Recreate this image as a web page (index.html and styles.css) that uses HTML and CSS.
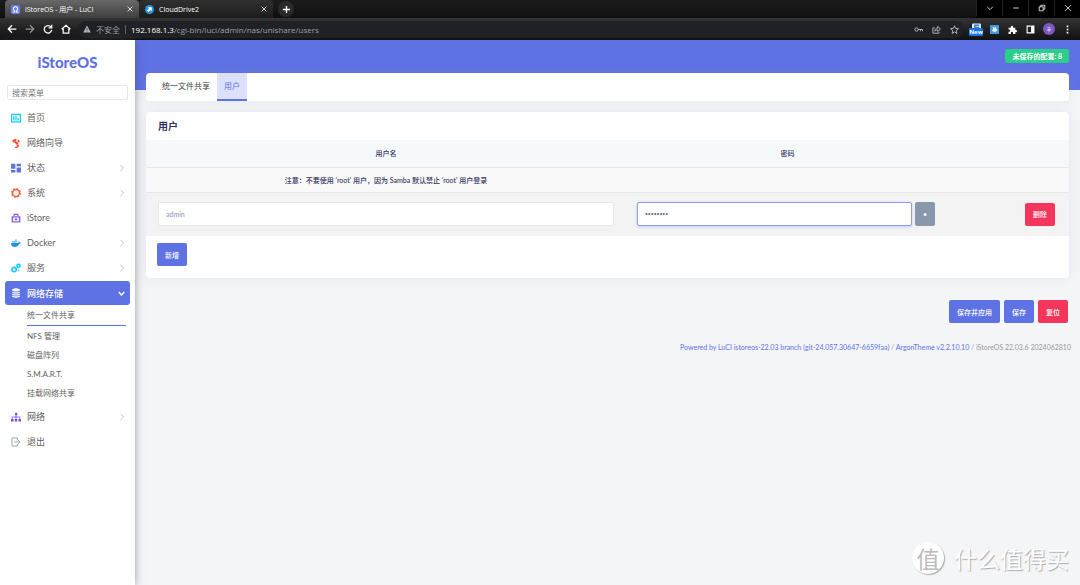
FILE: index.html
```html
<!DOCTYPE html>
<html lang="zh-CN">
<head>
<meta charset="utf-8">
<title>iStoreOS - 用户 - LuCI</title>
<link rel="stylesheet" href="styles.css">
</head>
<body>
<header class="browser">
  <div class="tabstrip">
    <div class="btab btab-active">
      <svg class="fav" viewBox="0 0 16 16"><rect width="16" height="16" rx="3" fill="#6b7df0"/><path d="M3 12.500h3.500v-2a3.800 3.800 0 1 1 3 0v2H13" fill="none" stroke="#fff" stroke-width="1.800"/></svg>
      <span class="btab-title">iStoreOS - 用户 - LuCI</span>
      <button class="x" aria-label="关闭标签页"><svg viewBox="0 0 10 10"><path d="M2 2l6 6M8 2L2 8"/></svg></button>
    </div>
    <div class="btab">
      <svg class="fav" viewBox="0 0 16 16"><circle cx="8" cy="8" r="8" fill="#2596dc"/><path d="M5 4h7v7l-2.500-2L6 12.500 3.500 10 7 6.500z" fill="#fff"/></svg>
      <span class="btab-title">CloudDrive2</span>
      <button class="x" aria-label="关闭标签页"><svg viewBox="0 0 10 10"><path d="M2 2l6 6M8 2L2 8"/></svg></button>
    </div>
    <button class="newtab" aria-label="新标签页"><svg viewBox="0 0 10 10"><path d="M5 1v8M1 5h8"/></svg></button>
    <div class="winctl">
      <button aria-label="搜索标签页"><svg viewBox="0 0 10 10"><path d="M1.500 3.500L5 7l3.500-3.500"/></svg></button>
      <button aria-label="最小化"><svg viewBox="0 0 10 10"><path d="M1.500 5h7"/></svg></button>
      <button aria-label="还原"><svg viewBox="0 0 10 10"><path d="M1.500 3.500h5v5h-5zM3.500 3.500v-2h5v5h-2"/></svg></button>
      <button aria-label="关闭"><svg viewBox="0 0 10 10"><path d="M1.500 1.500l7 7M8.500 1.500l-7 7"/></svg></button>
    </div>
  </div>
  <div class="toolbar">
    <div class="nav">
      <button aria-label="后退"><svg viewBox="0 0 16 16"><path d="M15 8H2M8 2L2 8l6 6"/></svg></button>
      <button class="dim" aria-label="前进"><svg viewBox="0 0 16 16"><path d="M1 8h13M8 2l6 6-6 6"/></svg></button>
      <button aria-label="重新加载"><svg viewBox="0 0 16 16"><path d="M13 5a6 6 0 1 0 1 4.500M14 1v5H9"/></svg></button>
      <button aria-label="主页"><svg viewBox="0 0 16 16"><path d="M1 8.500L8 2l7 6.500M3.500 7v7.500h9V7"/></svg></button>
    </div>
    <div class="address">
      <svg class="warn" viewBox="0 0 16 16"><path d="M8 1l7.500 14H.5z" fill="#b4b7bb"/><path d="M8 6v4M8 11.500v1.500" stroke="#202124" stroke-width="1.500"/></svg>
      <span class="unsafe">不安全</span>
      <span class="url"><b>192.168.1.3</b>/cgi-bin/luci/admin/nas/unishare/users</span>
      <span class="addr-actions">
        <svg viewBox="0 0 16 16"><circle cx="4.500" cy="8" r="3"/><path d="M7.500 8H15v3M11.500 8v3"/></svg>
        <svg viewBox="0 0 16 16"><path d="M5 5H1.500v9.500h11V12M5 11c0-4 3-5.500 5-5.500V2.500L15 7l-5 4.500v-3C8 8.500 6 9 5 11z"/></svg>
        <svg viewBox="0 0 16 16"><path d="M8 1.500l2 4.500 5 .5-3.800 3.300L12.300 15 8 12.300 3.700 15l1.100-5.200L1 6.500 6 6z"/></svg>
      </span>
    </div>
    <div class="ext">
      <span class="ext-new"><svg viewBox="0 0 16 16"><rect y="1" width="16" height="15" rx="2" fill="#e8edf3"/><path d="M13 4H5v4h8" fill="none" stroke="#2585c8" stroke-width="2.500"/></svg><i>New</i></span>
      <svg viewBox="0 0 16 16"><rect width="16" height="16" rx="1" fill="#4796df"/><path d="M5 3l3 2 3-2v4l3 2-5 4-6-3 2-2z" fill="#d9efff"/></svg>
      <svg viewBox="0 0 16 16"><path d="M1 5h4V3.500a2 2 0 0 1 4 0V5h4v4h1a2 2 0 0 1 0 4h-1v3H9v-2a2 2 0 0 0-4 0v2H1v-4h1a2 2 0 0 0 0-4H1z" fill="#fff"/></svg>
      <svg viewBox="0 0 16 16"><path d="M1 1h14v14H1zM3 3v10h6V3z" fill="#fff" fill-rule="evenodd"/></svg>
      <span class="avatar">丰</span>
      <svg viewBox="0 0 16 16"><path d="M6.500 1h3v3h-3zM6.500 6.500h3v3h-3zM6.500 12h3v3h-3z" fill="#fff"/></svg>
    </div>
  </div>
</header>

<div class="page">
  <aside class="sidebar">
    <a class="brand" href="#">iStoreOS</a>
    <input class="search" type="text" placeholder="搜索菜单" aria-label="搜索菜单">
    <nav class="menu">
      <a class="item" href="#"><svg viewBox="0 0 16 16"><path d="M0 1h16v14H0zM2 3v10h12V3z" fill="#11cdef" fill-rule="evenodd"/><path d="M3.500 5h2v7h-2zM7 4.500h2V12H7zM10.500 8h2v4h-2z" fill="#11cdef"/></svg><span>首页</span></a>
      <a class="item" href="#"><svg viewBox="0 0 16 16"><path d="M2 4l4-3 3 1-1 3 4 3-1 3-3-1-2-3-3 0zM11 2l3 3-1 3-3-3zM9 11l3-1 1 3-3 3H6l1-2 2 0z" fill="#fb5a3a"/></svg><span>网络向导</span></a>
      <a class="item" href="#"><svg viewBox="0 0 16 16"><path d="M0 1h7v8H0zM9 1h7v4H9zM9 7h7v8H9zM0 11h7v4H0z" fill="#5e72e4"/></svg><span>状态</span><svg class="arrow" viewBox="0 0 10 10"><path d="M3 1l4 4-4 4"/></svg></a>
      <a class="item" href="#"><svg viewBox="0 0 16 16"><circle cx="8" cy="8" r="5.500" fill="none" stroke="#fb6340" stroke-width="2.500"/><circle cx="8" cy="8" r="7" fill="none" stroke="#fb6340" stroke-width="2" stroke-dasharray="2.800 2.700"/></svg><span>系统</span><svg class="arrow" viewBox="0 0 10 10"><path d="M3 1l4 4-4 4"/></svg></a>
      <a class="item" href="#"><svg viewBox="0 0 16 16"><path d="M5 5V2h6v3" fill="none" stroke="#8965e0" stroke-width="2"/><path d="M1 5h14v10H1zM3.500 7v6h9V7z" fill="#8965e0" fill-rule="evenodd"/><path d="M7 8h2v1h1v2H9v1H7v-1H6V9h1z" fill="#8965e0"/></svg><span>iStore</span></a>
      <a class="item" href="#"><svg viewBox="0 0 16 16"><path d="M0 8h11c1 0 1.500-1 1-2.500l1-.5 1 2 2 .3c-.5 1.500-1.500 2-3 2C11.500 13 9 14.500 6 14.500 2 14.500 0 12 0 8zM2 5h2v2H2zM4.500 5h2v2h-2zM7 5h2v2H7zM7 2.500h2v2H7z" fill="#1d93e8"/></svg><span>Docker</span><svg class="arrow" viewBox="0 0 10 10"><path d="M3 1l4 4-4 4"/></svg></a>
      <a class="item" href="#"><svg viewBox="0 0 16 16"><g fill="none" stroke="#11cdef" stroke-width="2.500"><circle cx="5" cy="10.500" r="3.500"/><circle cx="12" cy="4.500" r="2.500"/></g><circle cx="12.500" cy="12" r="1.200" fill="#11cdef"/></svg><span>服务</span><svg class="arrow" viewBox="0 0 10 10"><path d="M3 1l4 4-4 4"/></svg></a>
      <a class="item open" href="#"><svg viewBox="0 0 16 16"><path d="M2 2q6-3 12 0v2.500q-6 2-12 0zM2 5.800q6 2 12 0v2q-6 2-12 0zM2 9q6 2 12 0v2q-6 2-12 0zM2 12.300q6 2 12 0V14.500q-6 2-12 0z" fill="#fff"/></svg><span>网络存储</span><svg class="arrow" viewBox="0 0 10 10"><path d="M1 3l4 4 4-4"/></svg></a>
      <div class="submenu">
        <a class="current" href="#">统一文件共享</a>
        <a href="#">NFS 管理</a>
        <a href="#">磁盘阵列</a>
        <a href="#">S.M.A.R.T.</a>
        <a href="#">挂载网络共享</a>
      </div>
      <a class="item" href="#"><svg viewBox="0 0 16 16"><path d="M6.500 1h3.500v4H6.500zM0 11h4v4H0zM6 11h4v4H6zM12 11h4v4h-4z" fill="#7f4be0"/><path d="M8 5v6M2 11V8h12v3" fill="none" stroke="#7f4be0" stroke-width="1.300"/></svg><span>网络</span><svg class="arrow" viewBox="0 0 10 10"><path d="M3 1l4 4-4 4"/></svg></a>
      <a class="item" href="#"><svg viewBox="0 0 16 16"><path d="M10 5V1.500H1.500v13H10V11M5 8h9.500M11.500 5l3 3-3 3" fill="none" stroke="#98a2ad" stroke-width="1.500"/></svg><span>退出</span></a>
    </nav>
  </aside>

  <div class="main">
    <div class="banner"><a class="badge" href="#">未保存的配置: 8</a></div>
    <main class="content">
      <nav class="tabs card">
        <a href="#">统一文件共享</a>
        <a class="selected" href="#">用户</a>
      </nav>
      <form class="section card">
        <h3>用户</h3>
        <table>
          <thead>
            <tr class="titles"><th class="c-name">用户名</th><th class="c-pass">密码</th><th class="c-act"></th></tr>
            <tr class="notes"><th>注意：不要使用 'root' 用户，因为 Samba 默认禁止 'root' 用户登录</th><th></th><th></th></tr>
          </thead>
          <tbody>
            <tr>
              <td><input class="field" type="text" value="admin" aria-label="用户名"></td>
              <td class="pass-cell"><div class="pass"><input class="field focus" type="password" value="12345678" aria-label="密码"><button class="btn reveal" type="button" aria-label="显示密码">•</button></div></td>
              <td class="right"><button class="btn danger" type="button">删除</button></td>
            </tr>
          </tbody>
        </table>
        <div class="add"><button class="btn" type="button">新增</button></div>
      </form>
      <div class="actions">
        <button class="btn" type="button">保存并应用</button>
        <button class="btn" type="button">保存</button>
        <button class="btn danger" type="button">复位</button>
      </div>
    </main>
    <footer><a href="#">Powered by LuCI istoreos-22.03 branch (git-24.057.30647-6659faa)</a> / <a href="#">ArgonTheme v2.2.10.10</a> / iStoreOS 22.03.6 2024062810</footer>
  </div>
</div>
<div class="watermark"><span class="seal">值</span><span>什么值得买</span></div>
</body>
</html>
```

FILE: styles.css
```css
* { box-sizing: border-box; }
body {
  margin: 0;
  min-height: 100vh;
  display: flex;
  flex-direction: column;
  background: #f4f5f7;
  color: #525f7f;
  font-family: Lato, "Noto Sans CJK SC", sans-serif;
  font-size: 8px;
}
a { color: inherit; text-decoration: none; }
button { padding: 0; border: 0; background: none; color: inherit; font: inherit; }
input { font: inherit; }
svg { display: block; flex: none; }

/* browser frame */
.browser { color: #fff; background: #111; font-family: "Open Sans", "Noto Sans CJK SC", sans-serif; }
.browser svg { fill: none; stroke-width: 1; }
.browser button svg { stroke: #fff; }
.tabstrip { display: flex; align-items: stretch; height: 18px; padding-left: 5px; background: linear-gradient(#1b1b1b, #101010); }
.btab { display: flex; align-items: center; width: 134px; padding: 0 5px 0 6px; background: linear-gradient(#303030, #1c1c1c); border-radius: 4px 4px 0 0; }
.btab-active { background: linear-gradient(#686868, #3e3e3e); }
.fav { width: 9px; height: 9px; margin-right: 5px; }
.btab-title { flex: 1; font-size: 7px; white-space: nowrap; }
.x svg { width: 8px; height: 8px; }
.newtab { display: flex; align-items: center; justify-content: center; width: 16px; margin: 1px 0 1px 5px; border-radius: 50%; background: #2a2a2a; }
.newtab svg { width: 9px; height: 9px; }
.browser .newtab svg { stroke-width: 1.5; }
.winctl { display: flex; margin-left: auto; background: #000; }
.winctl button { display: flex; align-items: center; justify-content: center; width: 26px; height: 16px; border-left: 1px solid #222; }
.winctl svg { width: 8px; height: 8px; }
.toolbar { display: flex; align-items: center; height: 22px; padding: 0 8px 0 6px; background: linear-gradient(#333, #111); }
.nav { display: flex; gap: 8px; padding: 0 7px 0 1px; }
.nav svg { width: 10px; height: 10px; }
.browser .nav svg { stroke-width: 2; }
.nav .dim { opacity: .5; }
.address { display: flex; flex: 1; align-items: center; height: 17px; padding: 0 5px; border-radius: 9px; background: #202124; color: #9aa0a6; }
.warn { width: 8px; height: 8px; margin-right: 5px; }
.unsafe { padding-right: 5px; margin-right: 5px; border-right: 1px solid #5f6368; line-height: 9px; }
.url b { color: #fff; font-weight: 400; }
.addr-actions { display: flex; gap: 9px; margin-left: auto; }
.addr-actions svg { width: 9px; height: 9px; stroke: #c4c7cb; stroke-width: 1.5; }
.ext { display: flex; align-items: center; gap: 9px; padding-left: 5px; }
.ext svg { width: 9px; height: 9px; }
.ext-new { display: flex; flex-direction: column; align-items: center; width: 14px; margin-right: -2px; }
.ext-new i { width: 14px; margin-top: -4px; border-radius: 1px; background: #1a73e8; font-size: 6px; font-style: normal; font-weight: 700; line-height: 8px; text-align: center; z-index: 1; }
.avatar { width: 12px; margin: 0 -1px; border-radius: 50%; background: #7e57c2; font-size: 5px; line-height: 12px; text-align: center; }

/* sidebar */
.page { display: flex; flex: 1; }
.sidebar { width: 135px; background: #fff; box-shadow: 0 0 8px rgba(60, 60, 80, .5); z-index: 1; }
.brand { display: block; padding-top: 13px; color: #5e72e4; font-size: 15px; font-weight: 900; line-height: 18px; text-align: center; }
.search { display: block; width: calc(100% - 14px); height: 15px; margin: 14px 7px 5px; padding: 0 4px; border: 1px solid #e6e8ee; border-radius: 2px; font-size: 8px; }
.search::placeholder { color: #777; }
.item { display: flex; align-items: center; height: 25px; padding: 0 9px 0 11px; color: #5f5f5f; font-size: 9px; }
.item > svg:first-child { width: 10px; height: 10px; margin-right: 6px; }
.item .arrow { width: 8px; height: 8px; margin-left: auto; fill: none; stroke: #a9b2c0; stroke-width: 1; }
.open { height: 24px; margin: 1px 5px 0; padding: 0 5px 0 6px; border-radius: 3px; background: #5e72e4; color: #fff; font-weight: 500; }
.item.open .arrow { width: 7px; height: 7px; stroke: #fff; stroke-width: 2; }
.submenu { display: flex; flex-direction: column; padding: 1px 9px 1px 27px; color: #5f5f5f; line-height: 19px; }
.submenu a + a { padding-top: 0; }
.submenu .current { margin-bottom: 1px; border-bottom: 1px solid #5e72e4; color: #5f5f5f; }

/* main column */
.main { flex: 1; min-width: 0; }
.banner { display: flex; justify-content: flex-end; align-items: flex-start; height: 50px; padding: 9px 11px 0; background: #5e72e4; }
.badge { padding: 0 7px; border-radius: 2px; background: #2dce89; color: #fff; font-size: 7px; font-weight: 700; line-height: 14px; }
.content { margin-top: -17px; padding: 0 11px; }
.card { background: #fff; border-radius: 4px; box-shadow: 0 0 12px rgba(136, 152, 170, .15); }
.tabs { display: flex; padding-left: 9px; line-height: 26px; color: #444; }
.tabs a { padding: 0 7px; border-bottom: 2px solid transparent; }
.tabs .selected { background: #dce0fb; border-color: #5e72e4; color: #5e72e4; }
.section { margin-top: 11px; }
h3 { margin: 0; padding: 0 12px; color: #32325d; font-size: 10px; line-height: 28px; }
table { width: 100%; table-layout: fixed; border-collapse: collapse; color: #32325d; }
th { height: 25px; padding: 0; background: #f9f9f9; border-bottom: 1px solid #e6e7ea; font-size: 7px; font-weight: 500; white-space: nowrap; }
.titles th { height: 27px; background: #f6f9fc; }
.c-name { width: 52%; }
.c-pass { width: 35%; }
.c-act { width: 13%; }
td { height: 44px; padding: 0 12px; background: #f3f3f3; }
.pass-cell { padding: 0 14px 0 11px; }
td.right { padding-right: 14px; text-align: right; }
.field { display: block; width: 100%; height: 24px; padding: 0 7px; border: 1px solid #e6e8ee; border-radius: 2px; background: #fff; color: #8898aa; font-size: 7px; }
.focus { border-color: #8f9dec; box-shadow: 0 1px 3px rgba(94, 114, 228, .3); font-size: 5px; }
.pass { display: flex; gap: 3px; }
.pass .field { flex: 1; min-width: 0; }
.pass .focus { font-size: 5px; color: #5f6b7c; }
.btn { height: 23px; padding: 0 8px; border-radius: 2px; background: #5e72e4; color: #fff; font-size: 7px; font-weight: 500; }
.danger { background: #f5365c; }
.reveal { width: 20px; height: 24px; padding: 0; background: #8898aa; }
.add { padding: 7px 11px 12px; }
.actions { display: flex; justify-content: flex-end; gap: 4px; padding: 22px 1px 0; }
footer { padding: 18px 9px 0; color: #999; font-size: 7px; line-height: 12px; text-align: right; }
footer a { color: #5e72e4; }

.watermark { position: absolute; right: 11px; bottom: 11px; display: flex; align-items: center; gap: 10px; color: #fff; font-family: "Noto Sans CJK SC", sans-serif; font-size: 23px; line-height: 32px; text-shadow: 1px 1px 1px #aaa; }
.seal { width: 32px; border-radius: 50%; background: #fff; box-shadow: 1px 1px 1px #aaa; color: #bbb; text-align: center; text-shadow: none; }
```
